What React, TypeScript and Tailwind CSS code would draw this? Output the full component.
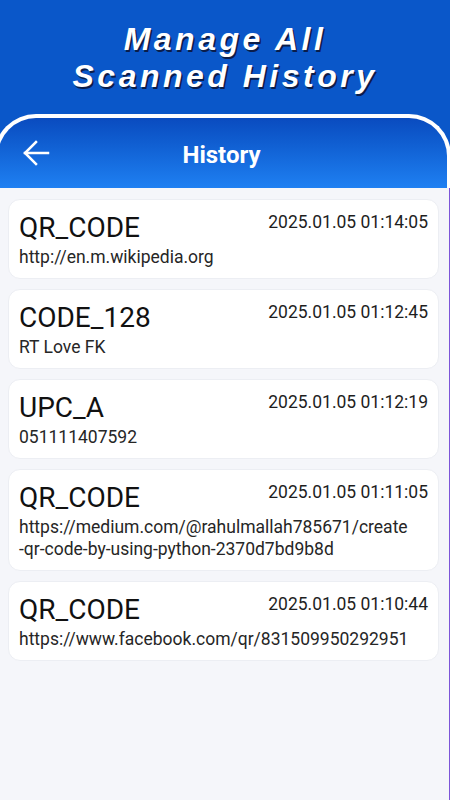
import React from 'react';

type Scan = {
  id: number;
  type: string;
  time: string;
  lines: string[];
};

const scans: Scan[] = [
  { id: 1, type: 'QR_CODE', time: '2025.01.05 01:14:05', lines: ['http://en.m.wikipedia.org'] },
  { id: 2, type: 'CODE_128', time: '2025.01.05 01:12:45', lines: ['RT Love FK'] },
  { id: 3, type: 'UPC_A', time: '2025.01.05 01:12:19', lines: ['051111407592'] },
  {
    id: 4,
    type: 'QR_CODE',
    time: '2025.01.05 01:11:05',
    lines: ['https://medium.com/@rahulmallah785671/create', '-qr-code-by-using-python-2370d7bd9b8d'],
  },
  { id: 5, type: 'QR_CODE', time: '2025.01.05 01:10:44', lines: ['https://www.facebook.com/qr/831509950292951'] },
];

const BackArrow: React.FC = () => (
  <svg width="28" height="26" viewBox="0 0 28 26" fill="none" stroke="white" strokeWidth="2.5" strokeLinecap="square">
    <path d="M3 13H26" />
    <path d="M14 2L3 13L14 24" />
  </svg>
);

const App: React.FC = () => {
  return (
    <div className="w-[450px] h-[800px] overflow-hidden bg-[#0a57c9] flex flex-col font-['Roboto',sans-serif]">
      {/* Promo title */}
      <div className="h-[114px] shrink-0 flex flex-col items-center justify-center pt-[2px] text-white italic font-bold text-[32px] leading-[37px] tracking-[3.5px] font-['Liberation_Sans',Arial,sans-serif] [text-shadow:1.5px_1.5px_0_#0b1d4a]">
        <div>Manage All</div>
        <div>Scanned History</div>
      </div>

      {/* App frame */}
      <div className="flex-1 flex flex-col min-h-0">
        <div className="h-[74px] shrink-0 -ml-[6px] w-[457px] rounded-t-[42px] border-t-4 border-x-4 border-white bg-gradient-to-b from-[#0a4bbf] to-[#1f80f2] flex items-center relative">
          <div className="absolute left-[24px] top-[22px]">
            <BackArrow />
          </div>
          <div className="flex-1 text-center text-white font-bold text-[24px] leading-[30px] pt-[4px] pr-[2px]">History</div>
        </div>

        <div className="flex-1 bg-[#f5f6fa] border-r border-[#7d55d8] pl-2 pr-[10px] pt-[11px] flex flex-col gap-[10px]">
          {scans.map(scan => (
            <div
              key={scan.id}
              className="bg-white rounded-[12px] border border-[#eceef3] pl-[10px] pr-[10px] pt-[11px] pb-[10px]"
            >
              <div className="flex items-start justify-between">
                <span className="text-[28px] leading-[34px] text-[#111]">{scan.type}</span>
                <span className="text-[17.5px] leading-[22px] text-[#1e1e1e]">{scan.time}</span>
              </div>
              <div className="mt-[1px] text-[17.5px] leading-[22px] text-[#262626]">
                {scan.lines.map(line => (
                  <div key={line}>{line}</div>
                ))}
              </div>
            </div>
          ))}
        </div>
      </div>
    </div>
  );
};

export default App;
